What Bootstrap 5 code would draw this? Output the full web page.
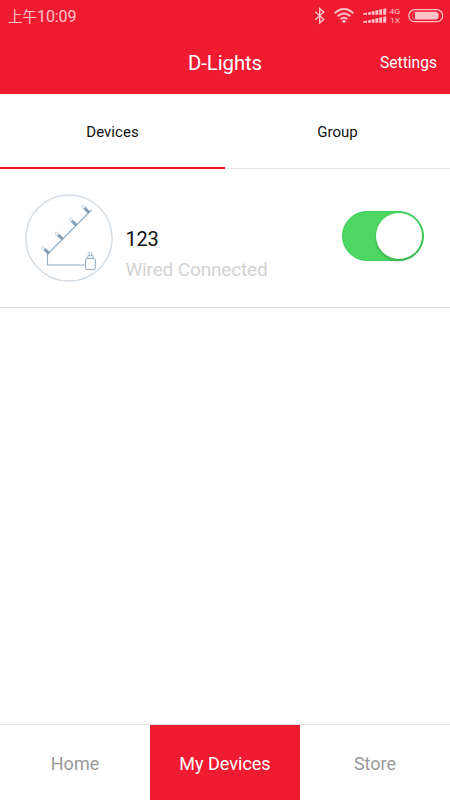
<!DOCTYPE html>
<html lang="en">
<head>
<meta charset="utf-8">
<meta name="viewport" content="width=device-width, initial-scale=1">
<title>D-Lights</title>
<link href="https://cdn.jsdelivr.net/npm/bootstrap@5.3.0/dist/css/bootstrap.min.css" rel="stylesheet">
<style>
:root { --brand: #ee1b31; }
body { font-family: Roboto, "Noto Sans CJK SC", sans-serif; height: 100vh; overflow: hidden; color: #111; }
svg { display: block; flex: none; }
.app-header { background: var(--brand); height: 93.5px; }
.status-bar { height: 32px; padding: 0 7px 0 8px; color: #fcc3c9; }
.clock { font-size: 16px; line-height: 32px; letter-spacing: -.1px; padding-top: 2px; }
.clock span { font-size: 14.5px; letter-spacing: 0; }
.title-bar { height: 61px; line-height: 61px; padding-right: 13px; padding-top: 1px; }
.app-title { font-size: 20.4px; line-height: 61px; letter-spacing: -.1px; }
.settings { font-size: 15.6px; line-height: 61px; letter-spacing: 0; }
.tabs { height: 75.5px; border-bottom: 1px solid #e6e6e6; }
.tabs .tab-item { font-size: 15px; letter-spacing: .05px; color: #111; padding-top: 3px; border-bottom: 2px solid transparent; margin-bottom: -1px; }
.tabs .tab-item.active { border-bottom-color: #ee1020; }
.device { height: 139px; border-bottom: 1px solid #dcdcdc; padding: 25px 26px 0 25px; }
.device-name { font-size: 20px; line-height: 30px; margin-top: 30px; letter-spacing: -.2px; }
.device-state { font-size: 19px; line-height: 32px; letter-spacing: -.15px; color: #d2d2d2; }
.device-text { margin-left: 12.4px; }
.toggle { width: 82px; height: 50px; margin-top: 17px; border-radius: 25px; background: #4cd764; border: 1px solid #3ecf59; padding-right: 1px; }
.toggle-knob { width: 46px; height: 46px; background: #fff; box-shadow: 0 2px 3px rgba(0,70,10,.28); }
.bottom-nav { height: 76px; border-top: 1px solid #dedede; }
.bottom-nav a { font-size: 18px; letter-spacing: 0; color: #999; padding-top: 1px; }
.bottom-nav a.active { background: var(--brand); color: #fff; }
</style>
</head>
<body class="d-flex flex-column bg-white">
<header class="app-header flex-shrink-0">
  <div class="status-bar d-flex justify-content-between align-items-center">
    <div class="clock"><span>上午</span>10:09</div>
    <svg width="132" height="32" viewBox="311 0 132 32" fill="none" stroke="#fcc3c9">
      <path d="M315.2 11.8l8.6 7.6-4.1 3.6V8.5l4.1 3.6-8.6 7.7" stroke-width="1.4"/>
      <path d="M334.7 13.2q9.3-8.2 18.6 0M337.7 16.3q6.3-5.5 12.6 0M340.6 19.2q3.4-2.8 6.8 0" stroke-width="1.9"/>
      <circle cx="344" cy="21.3" r="1.6" fill="#fcc3c9" stroke="none"/>
      <g fill="#fcc3c9" stroke="none">
        <path id="bars" d="M363 14.8v-1.4l4-.7v2.1zM368 14.8v-2.2l2.8-.6v2.8zM371.7 14.8v-3.4l2.8-.5v3.9zM375.4 14.8v-4.2l2.8-.6v4.8zM379.2 14.8V9.7l2.8-.6v5.7zM383.2 14.8V8.9l3-.7v6.6z"/>
        <use href="#bars" y="8"/>
        <text x="389.2" y="14" font-size="7.6" textLength="11" lengthAdjust="spacingAndGlyphs">4G</text>
        <text x="390" y="22.8" font-size="7.6" textLength="10" lengthAdjust="spacingAndGlyphs">1X</text>
      </g>
      <rect x="408.7" y="9.7" width="34" height="12" rx="6" stroke-width="1.2"/>
      <path d="M415 11.8h19.8a3.9 3.9 0 0 1 0 7.8H415z" fill="#fcc3c9" stroke="none"/>
      <path d="M415 12a3.8 3.8 0 0 0 0 7.4" stroke-width=".7" opacity=".6"/>
    </svg>
  </div>
  <div class="title-bar position-relative d-flex justify-content-end text-white">
    <h1 class="app-title fw-normal m-0 position-absolute start-0 end-0 text-center">D-Lights</h1>
    <a class="settings position-relative text-white text-decoration-none" href="#">Settings</a>
  </div>
</header>
<nav class="tabs d-flex flex-shrink-0">
  <a class="tab-item active w-50 d-flex align-items-center justify-content-center text-decoration-none" href="#">Devices</a>
  <a class="tab-item w-50 d-flex align-items-center justify-content-center text-decoration-none" href="#">Group</a>
</nav>
<main class="flex-grow-1">
  <div class="device d-flex align-items-start">
    <svg width="88" height="88" viewBox="25 194 88 88" fill="none" stroke="#91aabf">
      <circle cx="69" cy="238" r="43.1" stroke="#d3dce4" stroke-width="1.5"/>
      <path d="M91.5 210L47.5 254.3V265H85.3" stroke-width="1.1"/>
      <path d="M89.2 212.7l-4.8-4.5M76.5 225.3l-4.6-4.4M62.8 239.3l-4.8-4.4M49.1 253.6l-4.6-4.4" stroke="#849fb7" stroke-width="3"/>
      <g stroke="#b8c8d5" stroke-width=".8">
        <circle cx="83.3" cy="206.9" r="1.5"/><circle cx="70.8" cy="219.6" r="1.5"/><circle cx="56.7" cy="233.6" r="1.5"/><circle cx="43.3" cy="247.8" r="1.5"/>
      </g>
      <rect x="85.6" y="258.5" width="9.7" height="11" rx="1.3"/>
      <path d="M87.7 258.5v-2.7h5.6v2.7M89.1 255.8v-4M91.8 255.8v-4" stroke-width=".9"/>
    </svg>
    <div class="device-text flex-grow-1">
      <div class="device-name">123</div>
      <div class="device-state">Wired Connected</div>
    </div>
    <div class="toggle d-flex align-items-center justify-content-end" role="switch" aria-checked="true" aria-label="123">
      <div class="toggle-knob rounded-circle"></div>
    </div>
  </div>
</main>
<nav class="bottom-nav d-flex flex-shrink-0">
  <a class="flex-fill w-100 d-flex align-items-center justify-content-center text-decoration-none" href="#">Home</a>
  <a class="active flex-fill w-100 d-flex align-items-center justify-content-center text-decoration-none" href="#">My Devices</a>
  <a class="flex-fill w-100 d-flex align-items-center justify-content-center text-decoration-none" href="#">Store</a>
</nav>
<script src="https://cdn.jsdelivr.net/npm/bootstrap@5.3.0/dist/js/bootstrap.bundle.min.js"></script>
</body>
</html>
